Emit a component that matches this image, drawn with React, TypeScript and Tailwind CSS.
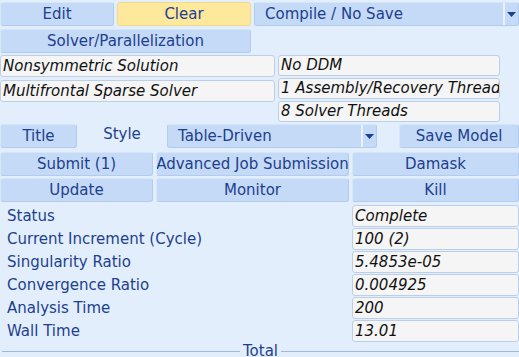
import React from "react";

const btn =
  "flex items-center justify-center h-full rounded-[3px] bg-[#c5daf6] border border-[#b3cbec] border-t-[#d6e6fa] border-l-[#d6e6fa] text-[#1d3f8f] whitespace-nowrap overflow-hidden";
const field =
  "flex items-center rounded-[3px] bg-[#f5f5f5] border border-[#bccfe9] px-[2px] italic text-[#111] whitespace-nowrap overflow-hidden";

function Arrow() {
  return (
    <svg width="9" height="5" viewBox="0 0 9 5">
      <path d="M0 0h9L4.5 5z" fill="#1d3f8f" />
    </svg>
  );
}

function Combo({ label, className }: { label: string; className: string }) {
  return (
    <div className={`${className} flex h-full rounded-[3px] bg-[#c5daf6] border border-[#b3cbec] border-t-[#d6e6fa] text-[#1d3f8f] overflow-hidden`}>
      <div className="flex-1 flex items-center pl-[10px] whitespace-nowrap">{label}</div>
      <div className="w-[15px] flex items-center justify-center border-l-2 border-[#e8f1fd]">
        <Arrow />
      </div>
    </div>
  );
}

const stats: [string, string][] = [
  ["Status", "Complete"],
  ["Current Increment (Cycle)", "100 (2)"],
  ["Singularity Ratio", "5.4853e-05"],
  ["Convergence Ratio", "0.004925"],
  ["Analysis Time", "200"],
  ["Wall Time", "13.01"],
];

export default function App() {
  return (
    <div
      className="w-[519px] h-[357px] bg-[#e3eefc] overflow-hidden text-[15px] leading-none"
      style={{ fontFamily: '"DejaVu Sans", sans-serif' }}
    >
      <div className="pt-[2px] flex gap-[3px] h-[26px]">
        <div className={`${btn} w-[114px]`}>Edit</div>
        <div className={`${btn} w-[134px] !bg-[#fde89b] !border-[#f0d98a]`}>Clear</div>
        <Combo label="Compile / No Save" className="flex-1" />
      </div>
      <div className="mt-[3px] h-[24px] flex">
        <div className={`${btn} w-[251px]`}>Solver/Parallelization</div>
      </div>
      <div className="mt-[2px] flex gap-[3px] h-[68px]">
        <div className="w-[275px] flex flex-col gap-[3px]">
          <div className={`${field} h-[22px]`}>Nonsymmetric Solution</div>
          <div className={`${field} h-[22px]`}>Multifrontal Sparse Solver</div>
        </div>
        <div className="w-[222px] flex flex-col gap-[2px]">
          <div className={`${field} h-[21px]`}>No DDM</div>
          <div className={`${field} h-[21px]`}>1 Assembly/Recovery Thread</div>
          <div className={`${field} h-[21px]`}>8 Solver Threads</div>
        </div>
      </div>
      <div className="mt-[1px] h-[24px] flex items-stretch">
        <div className={`${btn} w-[77px]`}>Title</div>
        <div className="w-[90px] flex items-center justify-center text-[#1d3f8f] pb-[3px]">Style</div>
        <Combo label="Table-Driven" className="w-[210px]" />
        <div className="w-[22px]" />
        <div className={`${btn} flex-1`}>Save Model</div>
      </div>
      <div className="mt-[4px] h-[24px] flex gap-[3px]">
        <div className={`${btn} w-[153px]`}>Submit (1)</div>
        <div className={`${btn} w-[193px]`}>Advanced Job Submission</div>
        <div className={`${btn} flex-1`}>Damask</div>
      </div>
      <div className="mt-[2px] h-[24px] flex gap-[3px]">
        <div className={`${btn} w-[153px]`}>Update</div>
        <div className={`${btn} w-[193px]`}>Monitor</div>
        <div className={`${btn} flex-1`}>Kill</div>
      </div>
      <div className="mt-[3px] flex flex-col gap-[1px]">
        {stats.map(([k, v]) => (
          <div key={k} className="h-[22px] flex">
            <div className="w-[352px] pl-[7px] flex items-center text-[#1d3f8f]">{k}</div>
            <div className={`${field} flex-1`}>{v}</div>
          </div>
        ))}
      </div>
      <div className="mt-[2px] flex items-center gap-[3px] pl-[2px]">
        <div className="w-[238px] h-px bg-[#9fb7d8]" />
        <span className="text-[#1d3f8f]">Total</span>
        <div className="flex-1 h-px bg-[#9fb7d8]" />
      </div>
    </div>
  );
}
